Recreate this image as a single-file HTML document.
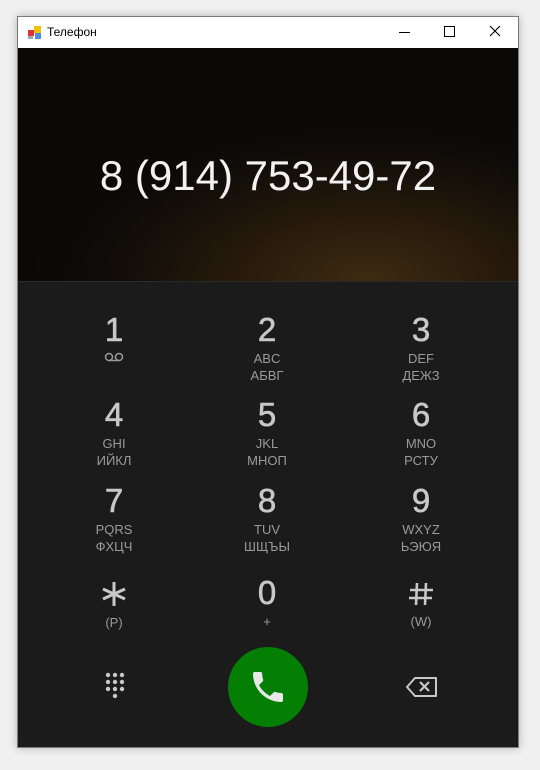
<!DOCTYPE html>
<html><head><meta charset="utf-8"><style>
body{margin:0;width:540px;height:770px;background:#f0f0f0;position:relative;overflow:hidden;font-family:"Liberation Sans","DejaVu Sans",sans-serif}
.win{position:absolute;left:17px;top:16px;width:502px;height:732px;border:1px solid #7a7a7a;box-shadow:0 0 8px rgba(0,0,0,.25);background:#1b1b1b;box-sizing:border-box}
.tb{position:absolute;left:0;top:0;right:0;height:31px;background:#fff;font-size:12px;color:#000}
.hdr{position:absolute;left:0;top:31px;right:0;height:233px;background:radial-gradient(ellipse 70% 75% at 70% 100%,#3d2b11 0%,#25190b 40%,#0e0b08 78%,#0a0908 100%);border-bottom:1px solid #2a2a2a}
.num{position:absolute;left:0;right:0;top:104px;text-align:center;color:#f2f2f2;font-size:42px;font-family:"Liberation Sans",sans-serif}
.k{position:absolute;width:120px;margin-left:-60px;text-align:center}
.d{color:#c8c8c8;font-size:33px;line-height:34px;font-family:"Liberation Sans",sans-serif;-webkit-text-stroke:0.6px #c8c8c8}
.l{color:#9a9a9a;font-size:13px;line-height:17px;margin-top:3px}
</style></head><body>
<div class="win">
<div class="tb">
<svg style="position:absolute;left:10px;top:9px" width="14" height="13"><rect x="0" y="4" width="6" height="6" fill="#d33"/><rect x="6" y="0" width="7" height="7" fill="#f2c200"/><rect x="7" y="7" width="6" height="6" fill="#4d8ee0"/><rect x="0" y="10" width="5" height="3" fill="#9ab"/></svg>
<span style="position:absolute;left:29px;top:8px">Телефон</span>
<div style="position:absolute;left:381px;top:15px;width:11px;height:1px;background:#000"></div>
<div style="position:absolute;left:426px;top:9px;width:9px;height:9px;border:1px solid #000"></div>
<svg style="position:absolute;left:471px;top:8px" width="12" height="12"><path d="M1 1L11 11M11 1L1 11" stroke="#000" stroke-width="1.1"/></svg>
</div>
<div class="hdr"><div class="num">8 (914) 753-49-72</div></div>
<div class="k" style="left:96px;top:296px"><div class="d">1</div><div class="l"><svg width="22" height="12"><circle cx="6" cy="6" r="3.5" fill="none" stroke="#9a9a9a" stroke-width="1.5"/><circle cx="16" cy="6" r="3.5" fill="none" stroke="#9a9a9a" stroke-width="1.5"/><path d="M6 9.5H16" stroke="#9a9a9a" stroke-width="1.5"/></svg></div></div>
<div class="k" style="left:249px;top:296px"><div class="d">2</div><div class="l">ABC<br>АБВГ</div></div>
<div class="k" style="left:403px;top:296px"><div class="d">3</div><div class="l">DEF<br>ДЕЖЗ</div></div>
<div class="k" style="left:96px;top:381px"><div class="d">4</div><div class="l">GHI<br>ИЙКЛ</div></div>
<div class="k" style="left:249px;top:381px"><div class="d">5</div><div class="l">JKL<br>МНОП</div></div>
<div class="k" style="left:403px;top:381px"><div class="d">6</div><div class="l">MNO<br>РСТУ</div></div>
<div class="k" style="left:96px;top:467px"><div class="d">7</div><div class="l">PQRS<br>ФХЦЧ</div></div>
<div class="k" style="left:249px;top:467px"><div class="d">8</div><div class="l">TUV<br>ШЩЪЫ</div></div>
<div class="k" style="left:403px;top:467px"><div class="d">9</div><div class="l">WXYZ<br>ЬЭЮЯ</div></div>
<div class="k" style="left:96px;top:562px"><svg width="30" height="30" viewBox="0 0 30 30"><path d="M15 3V27M4 10L26 20M26 10L4 20" stroke="#c8c8c8" stroke-width="3"/></svg><div class="l" style="margin-top:0">(P)</div></div>
<div class="k" style="left:249px;top:559px"><div class="d">0</div><div class="l">+</div></div>
<div class="k" style="left:403px;top:563px"><svg width="28" height="28" viewBox="0 0 28 28"><path d="M10 3L9 25M19 3L18 25M3 10H26M2 18H25" stroke="#c8c8c8" stroke-width="2.6"/></svg><div class="l" style="margin-top:0">(W)</div></div>
<svg style="position:absolute;left:87px;top:655px" width="22" height="30" viewBox="0 0 22 30"><g fill="#c8c8c8"><circle cx="3" cy="3" r="2.2"/><circle cx="10" cy="3" r="2.2"/><circle cx="17" cy="3" r="2.2"/><circle cx="3" cy="10" r="2.2"/><circle cx="10" cy="10" r="2.2"/><circle cx="17" cy="10" r="2.2"/><circle cx="3" cy="17" r="2.2"/><circle cx="10" cy="17" r="2.2"/><circle cx="17" cy="17" r="2.2"/><circle cx="10" cy="24" r="2.2"/></g></svg>
<div style="position:absolute;left:210px;top:630px;width:80px;height:80px;border-radius:50%;background:#047f04"></div>
<svg style="position:absolute;left:230px;top:650px" width="40" height="40" viewBox="0 0 24 24"><path d="M6.6 10.8c1.4 2.8 3.8 5.1 6.6 6.6l2.2-2.2c.3-.3.7-.4 1-.2 1.1.4 2.3.6 3.6.6.6 0 1 .4 1 1V20c0 .6-.4 1-1 1C10.6 21 3 13.4 3 4c0-.6.4-1 1-1h3.5c.6 0 1 .4 1 1 0 1.3.2 2.5.6 3.6.1.3 0 .7-.2 1z" fill="#e8e8e8"/></svg>
<svg style="position:absolute;left:387px;top:659px" width="34" height="22" viewBox="0 0 34 22"><path d="M10 2H31V20H10L2 11Z" fill="none" stroke="#c8c8c8" stroke-width="2" stroke-linejoin="round"/><path d="M15 6L24 15M24 6L15 15" stroke="#c8c8c8" stroke-width="2.2"/></svg>
</div>
</body></html>
